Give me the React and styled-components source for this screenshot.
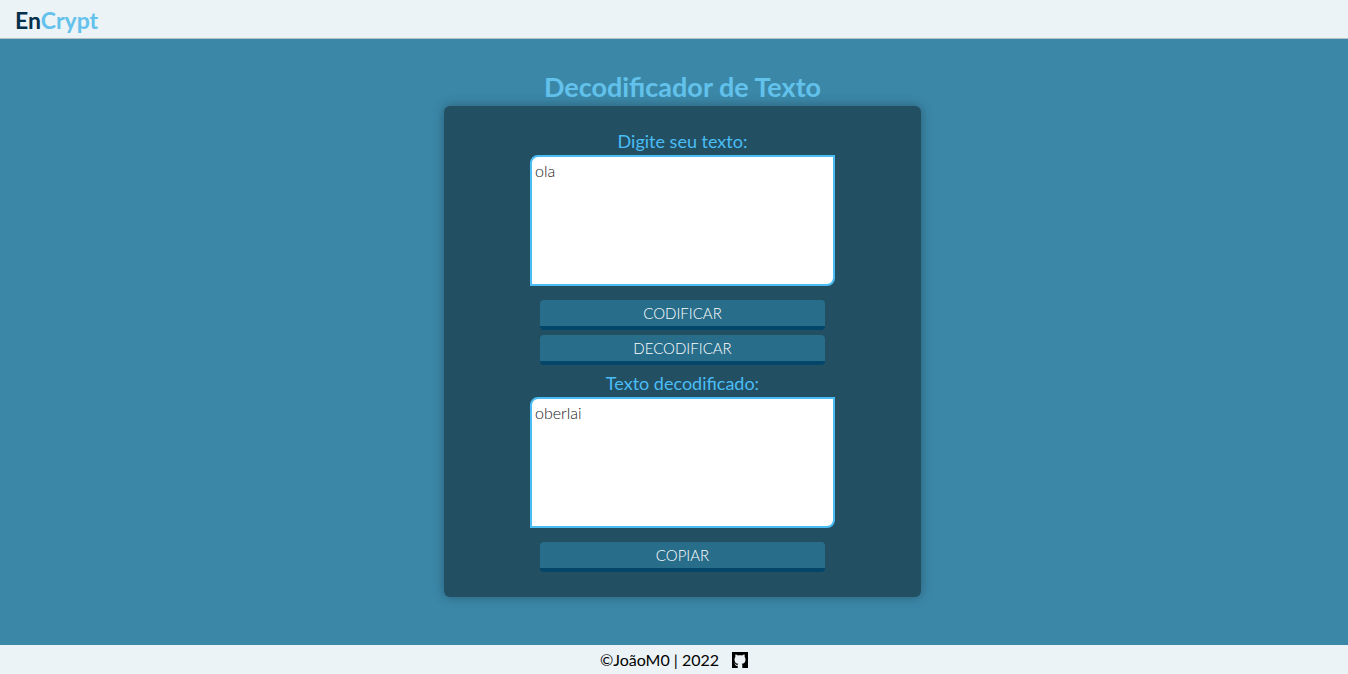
import React, { useState } from "react";
import styled, { createGlobalStyle } from "styled-components";

const GlobalStyle = createGlobalStyle`
  * { box-sizing: border-box; }
  body {
    margin: 0;
    background: #3b87a8;
    font-family: Lato, "Liberation Sans", sans-serif;
  }
`;

const Page = styled.div`
  min-height: 100vh;
  display: flex;
  flex-direction: column;
`;

const Header = styled.header`
  padding: 6px 15px 4px;
  display: flex;
  align-items: center;
  background: #ebf3f7;
  border-bottom: 1px solid #b4c0c6;
`;

const Logo = styled.a`
  font-size: 23px;
  line-height: 28px;
  font-weight: 700;
  color: #052f4a;
  text-decoration: none;
`;

const LogoAccent = styled.span`
  color: #62c2eb;
`;

const Main = styled.main`
  flex: 1;
  padding: 29px 0 48px 17px;
  display: flex;
  flex-direction: column;
  align-items: center;
`;

const Title = styled.h1`
  margin: 0;
  font-size: 27px;
  line-height: 38px;
  font-weight: 700;
  color: #62c2eb;
`;

const Card = styled.section`
  width: 477px;
  max-width: 100%;
  padding: 22px 20px 25px;
  display: flex;
  flex-direction: column;
  align-items: center;
  gap: 5px;
  background: #234f63;
  border-radius: 6px;
  box-shadow: 0 0 12px rgba(0, 0, 0, 0.3);
`;

const Field = styled.div`
  width: 305px;
  max-width: 100%;
  display: flex;
  flex-direction: column;
`;

const Label = styled.label`
  font-size: 18px;
  line-height: 27px;
  text-align: center;
  color: #4abdf5;
`;

const TextArea = styled.textarea`
  display: block;
  width: 100%;
  height: 131px;
  padding: 2px 3px;
  border: 2px solid #4abdf5;
  border-radius: 8px 0;
  outline: none;
  resize: none;
  background: #fff;
  color: #222;
  font: 300 16px/23px Lato, "Liberation Sans", sans-serif;
`;

const Actions = styled.div`
  width: 285px;
  max-width: 100%;
  padding-top: 9px;
  display: flex;
  flex-direction: column;
  gap: 5px;
`;

const Button = styled.button`
  height: 30px;
  padding: 0;
  border: 0;
  border-bottom: 4px solid #04456a;
  border-radius: 4px;
  background: #286d8a;
  color: #fff;
  font: 300 15px/26px Lato, "Liberation Sans", sans-serif;
  cursor: pointer;
`;

const Footer = styled.footer`
  height: 29px;
  display: flex;
  align-items: center;
  justify-content: center;
  gap: 13px;
  background: #ebf3f7;
  color: #000;
  font-size: 16px;
  line-height: 24px;
`;

const IconLink = styled.a`
  display: flex;
  color: #000;
`;

function GithubIcon() {
  return (
    <svg width="16" height="16" viewBox="0 0 16 16" fill="currentColor" fillRule="evenodd" aria-hidden="true">
      <path d="M0 0H16V16H10.3V13.3C10.3 12.5 10.1 12 9.7 11.7C12 11.4 13.5 10.4 13.5 7.4C13.5 6.5 13.2 5.7 12.6 5.1C12.8 4.4 12.8 3.5 12.5 2.6C11.8 2.5 10.9 2.9 10.1 3.5C8.8 3.2 7.2 3.2 5.9 3.5C5.1 2.9 4.2 2.5 3.5 2.6C3.2 3.5 3.2 4.4 3.4 5.1C2.8 5.7 2.5 6.5 2.5 7.4C2.5 10.4 4 11.4 6.3 11.7C6 12 5.8 12.3 5.7 12.8C4.9 13.1 4.1 12.9 3.5 12C3.2 11.5 2.8 11.1 2 11.2C2.7 11.6 2.9 12 3.1 12.5C3.5 13.7 4.4 14.1 5.7 13.8V16H0Z" />
    </svg>
  );
}

const encode = (s) =>
  s.replace(/[eioau]/g, (c) => ({ e: "enter", i: "imes", a: "ai", o: "ober", u: "ufat" })[c]);

const decode = (s) =>
  s.replace(/enter|imes|ai|ober|ufat/g, (c) => c[0]);

export default function App() {
  const [text, setText] = useState("ola");
  const [result, setResult] = useState("oberlai");

  return (
    <>
      <GlobalStyle />
      <Page>
        <Header>
          <Logo href="#">
            En<LogoAccent>Crypt</LogoAccent>
          </Logo>
        </Header>
        <Main>
          <Title>Decodificador de Texto</Title>
          <Card>
            <Field>
              <Label htmlFor="source">Digite seu texto:</Label>
              <TextArea id="source" spellCheck={false} value={text} onChange={(e) => setText(e.target.value)} />
            </Field>
            <Actions>
              <Button type="button" onClick={() => setResult(encode(text))}>CODIFICAR</Button>
              <Button type="button" onClick={() => setResult(decode(text))}>DECODIFICAR</Button>
            </Actions>
            <Field>
              <Label htmlFor="result">Texto decodificado:</Label>
              <TextArea id="result" spellCheck={false} readOnly value={result} />
            </Field>
            <Actions>
              <Button type="button" onClick={() => navigator.clipboard?.writeText(result)}>COPIAR</Button>
            </Actions>
          </Card>
        </Main>
        <Footer>
          <span>©JoãoM0 | 2022</span>
          <IconLink href="#" aria-label="GitHub">
            <GithubIcon />
          </IconLink>
        </Footer>
      </Page>
    </>
  );
}
